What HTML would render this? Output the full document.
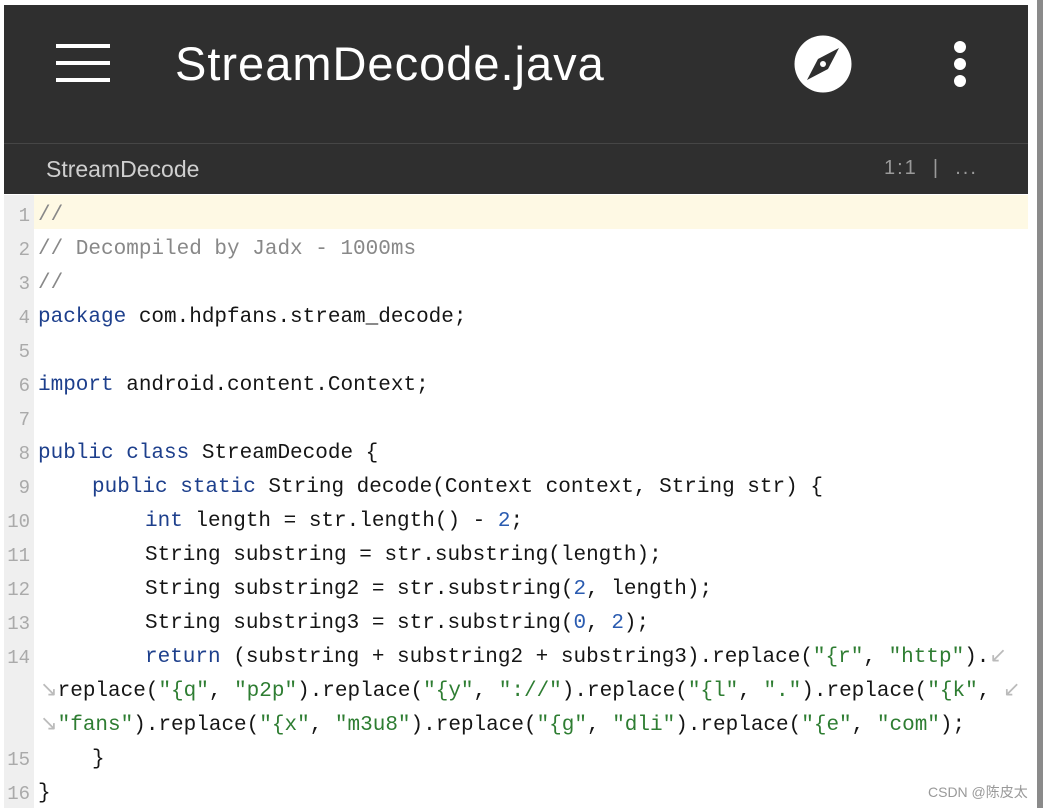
<!DOCTYPE html>
<html><head><meta charset="utf-8"><style>
*{margin:0;padding:0;box-sizing:border-box}
html,body{width:1043px;height:808px;overflow:hidden}
body{background:#fff;position:relative;font-family:"Liberation Sans",sans-serif}
.top{position:absolute;left:4px;top:5px;width:1024px;height:138px;background:#2f2f2f}
.sep{position:absolute;left:4px;top:143px;width:1024px;height:1px;background:#464646}
.sub{position:absolute;left:4px;top:144px;width:1024px;height:50px;background:#2f2f2f}
.sb{position:absolute;left:1037px;top:0;width:6px;height:808px;background:#8a8a8a}
.title{position:absolute;left:175px;top:36px;color:#fff;font-size:47px;letter-spacing:1px}
.subt{position:absolute;left:46px;top:156px;color:#cfcfcf;font-size:23px}
.pos{position:absolute;left:884px;top:157px;color:#9a9a9a;font-size:20px;letter-spacing:2px}
.gut{position:absolute;left:4px;top:195px;width:30px;height:613px;background:#efefef}
.hl{position:absolute;left:34px;top:195px;width:994px;height:34px;background:#fef9e4}
.code{position:absolute;left:0;top:199px;width:1030px;font-family:"Liberation Mono",monospace;font-size:21px;line-height:34px;color:#151515}
.row{height:34px;position:relative}
.n{position:absolute;left:4px;width:26px;text-align:right;color:#aaa;font-size:19px}
.t{position:absolute;left:38px;white-space:pre}
.k{color:#1d3f8c}.s{color:#2e7d32}.c{color:#888}.d{color:#2a5bb0}
.w{color:#bbb}
.wm{position:absolute;left:928px;top:782px;color:#999;font-size:14px}
</style></head><body>
<div class="top"></div><div class="sep"></div><div class="sub"></div><div class="sb"></div>
<svg style="position:absolute;left:56px;top:44px" width="54" height="38"><rect y="0" width="54" height="4" fill="#fff"/><rect y="17" width="54" height="4" fill="#fff"/><rect y="34" width="54" height="4" fill="#fff"/></svg>
<div class="title">StreamDecode.java</div>
<svg style="position:absolute;left:794px;top:35px" width="58" height="58" viewBox="0 0 58 58"><circle cx="29" cy="29" r="28.5" fill="#fff"/><path d="M45 13 L34 34 L13 45 L24 24 Z" fill="#2f2f2f"/><circle cx="29" cy="29" r="3" fill="#fff"/></svg>
<svg style="position:absolute;left:951px;top:40px" width="18" height="48"><circle cx="9" cy="7" r="6" fill="#fff"/><circle cx="9" cy="24" r="6" fill="#fff"/><circle cx="9" cy="41" r="6" fill="#fff"/></svg>
<div class="subt">StreamDecode</div>
<div class="pos">1:1 &nbsp;|&nbsp; ...</div>
<div class="gut"></div><div class="hl"></div>
<div class="code"><div class="row"><span class="n">1</span><span class="t c">//</span></div><div class="row"><span class="n">2</span><span class="t c">// Decompiled by Jadx - 1000ms</span></div><div class="row"><span class="n">3</span><span class="t c">//</span></div><div class="row"><span class="n">4</span><span class="t"><span class="k">package</span> com.hdpfans.stream_decode;</span></div><div class="row"><span class="n">5</span></div><div class="row"><span class="n">6</span><span class="t"><span class="k">import</span> android.content.Context;</span></div><div class="row"><span class="n">7</span></div><div class="row"><span class="n">8</span><span class="t"><span class="k">public class</span> StreamDecode {</span></div><div class="row"><span class="n">9</span><span class="t" style="left:92px"><span class="k">public static</span> String decode(Context context, String str) {</span></div><div class="row"><span class="n">10</span><span class="t" style="left:145px"><span class="k">int</span> length = str.length() - <span class="d">2</span>;</span></div><div class="row"><span class="n">11</span><span class="t" style="left:145px">String substring = str.substring(length);</span></div><div class="row"><span class="n">12</span><span class="t" style="left:145px">String substring2 = str.substring(<span class="d">2</span>, length);</span></div><div class="row"><span class="n">13</span><span class="t" style="left:145px">String substring3 = str.substring(<span class="d">0</span>, <span class="d">2</span>);</span></div><div class="row"><span class="n">14</span><span class="t" style="left:145px"><span class="k">return</span> (substring + substring2 + substring3).replace(<span class="s">"{r"</span>, <span class="s">"http"</span>).<span class="w">↙</span></span></div><div class="row"><span class="t" style="left:40px"><span class="w">↘</span>replace(<span class="s">"{q"</span>, <span class="s">"p2p"</span>).replace(<span class="s">"{y"</span>, <span class="s">"://"</span>).replace(<span class="s">"{l"</span>, <span class="s">"."</span>).replace(<span class="s">"{k"</span>, <span class="w">↙</span></span></div><div class="row"><span class="t" style="left:40px"><span class="w">↘</span><span class="s">"fans"</span>).replace(<span class="s">"{x"</span>, <span class="s">"m3u8"</span>).replace(<span class="s">"{g"</span>, <span class="s">"dli"</span>).replace(<span class="s">"{e"</span>, <span class="s">"com"</span>);</span></div><div class="row"><span class="n">15</span><span class="t" style="left:92px">}</span></div><div class="row"><span class="n">16</span><span class="t">}</span></div></div>
<div class="wm">CSDN @陈皮太</div>
</body></html>
